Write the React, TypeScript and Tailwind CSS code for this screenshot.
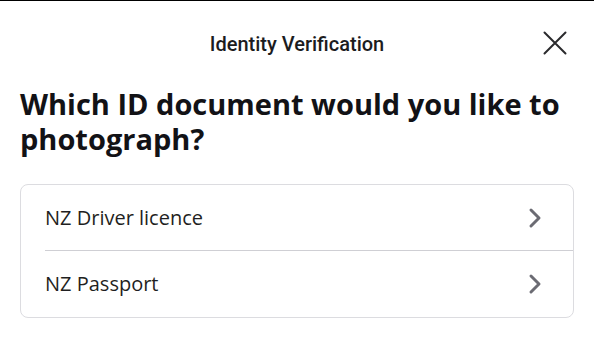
import React from "react";

const options = ["NZ Driver licence", "NZ Passport"];

function Chevron() {
  return (
    <svg width="14" height="22" viewBox="0 0 14 22" fill="none" className="shrink-0">
      <path d="M3 3l8 8-8 8" stroke="#6b6b73" strokeWidth="3" strokeLinecap="round" strokeLinejoin="round" />
    </svg>
  );
}

export default function App() {
  return (
    <div className="w-[594px] h-[345px] bg-white border-t border-black overflow-hidden">
      {/* Header */}
      <div className="relative h-[85px] flex items-center justify-center">
        <span className="text-[20px] leading-6 font-medium text-[#1c1c1e] font-['Roboto',sans-serif]">
          Identity Verification
        </span>
        <button className="absolute right-[27px] top-[30px] w-6 h-6 flex items-center justify-center">
          <svg width="24" height="24" viewBox="0 0 24 24" fill="none">
            <path d="M1.5 1.5l21 21M22.5 1.5l-21 21" stroke="#2a2a2d" strokeWidth="2" strokeLinecap="round" />
          </svg>
        </button>
      </div>

      <div className="px-5">
        <h1 className="text-[29px] leading-[35px] font-bold text-[#121216] font-['Open_Sans',sans-serif]">
          Which ID document would you like to photograph?
        </h1>

        <div className="mt-[28px] border border-[#dcdce0] rounded-lg font-['Open_Sans',sans-serif]">
          {options.map((label, i) => (
            <div key={label} className="pl-6">
              <div
                className={`h-[66px] flex items-center justify-between pr-[31px] ${
                  i < options.length - 1 ? "border-b border-[#cfcfd4]" : ""
                }`}
              >
                <span className="text-[20px] text-[#1f1f22]">{label}</span>
                <Chevron />
              </div>
            </div>
          ))}
        </div>
      </div>
    </div>
  );
}
